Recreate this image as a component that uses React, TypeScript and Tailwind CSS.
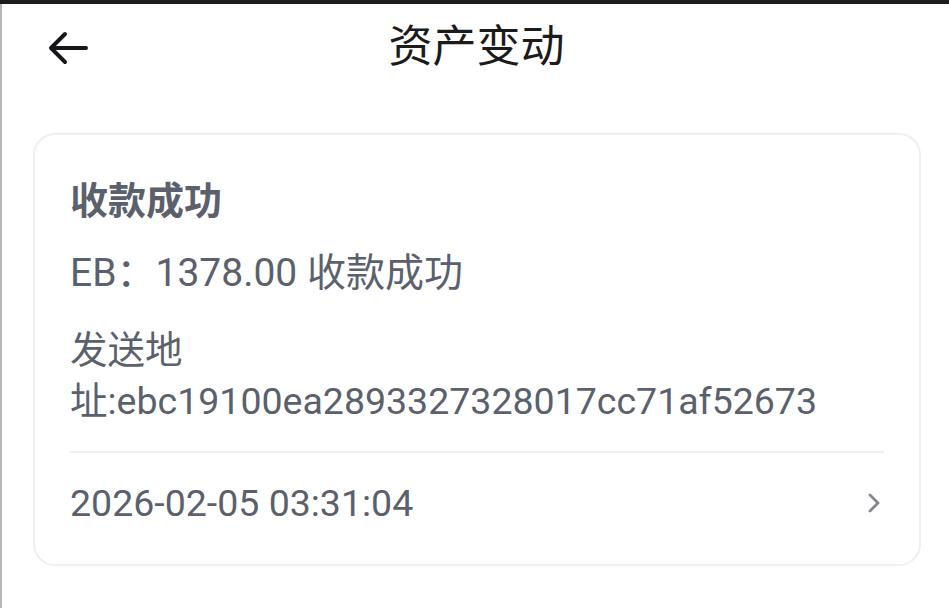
import React from "react";

const FONT = '"Roboto", "Noto Sans CJK SC", sans-serif';

export default function App() {
  return (
    <div className="w-[949px] h-[608px] bg-white overflow-hidden flex flex-col" style={{ fontFamily: FONT }}>
      <div className="h-[4px] bg-[#1c1c1c] shrink-0" />
      <div className="flex-1 flex border-l-2 border-[#b5b5b5]">
        <div className="flex-1 flex flex-col">
          <div className="relative h-[88px] flex items-center justify-center">
            <svg className="absolute left-[44px] top-[25px]" width="44" height="38" viewBox="0 0 44 38" fill="none">
              <path d="M40 19H6M19 5L5 19l14 14" stroke="#15171c" strokeWidth="4" strokeLinecap="round" strokeLinejoin="round" />
            </svg>
            <span className="text-[44px] leading-none text-[#1b1b1b] -mt-[2px] ml-[2px]">资产变动</span>
          </div>
          <div className="ml-[31px] mr-[28px] mt-[41px] rounded-[22px] border-2 border-[#efefef] px-[35px] pt-[42px] pb-[39px]">
            <div className="text-[38px] leading-[48px] font-bold text-[#5b616c]">收款成功</div>
            <div className="mt-[24px] text-[39px] leading-[48px] text-[#5b616c]">EB：1378.00 收款成功</div>
            <div className="mt-[28px] text-[37.5px] leading-[51px] text-[#5b616c]">发送地址:ebc19100ea2893327328017cc71af52673</div>
            <div className="mt-[24px] h-[2px] bg-[#f0f0f0]" />
            <div className="flex items-center justify-between pt-[28px]">
              <span className="text-[37.5px] leading-[44px] text-[#5b616c]">2026-02-05 03:31:04</span>
              <svg width="16" height="24" viewBox="0 0 16 24" fill="none" className="mr-[2px]">
                <path d="M4 4l8 8-8 8" stroke="#83868c" strokeWidth="2.8" strokeLinecap="round" strokeLinejoin="round" />
              </svg>
            </div>
          </div>
        </div>
      </div>
    </div>
  );
}
